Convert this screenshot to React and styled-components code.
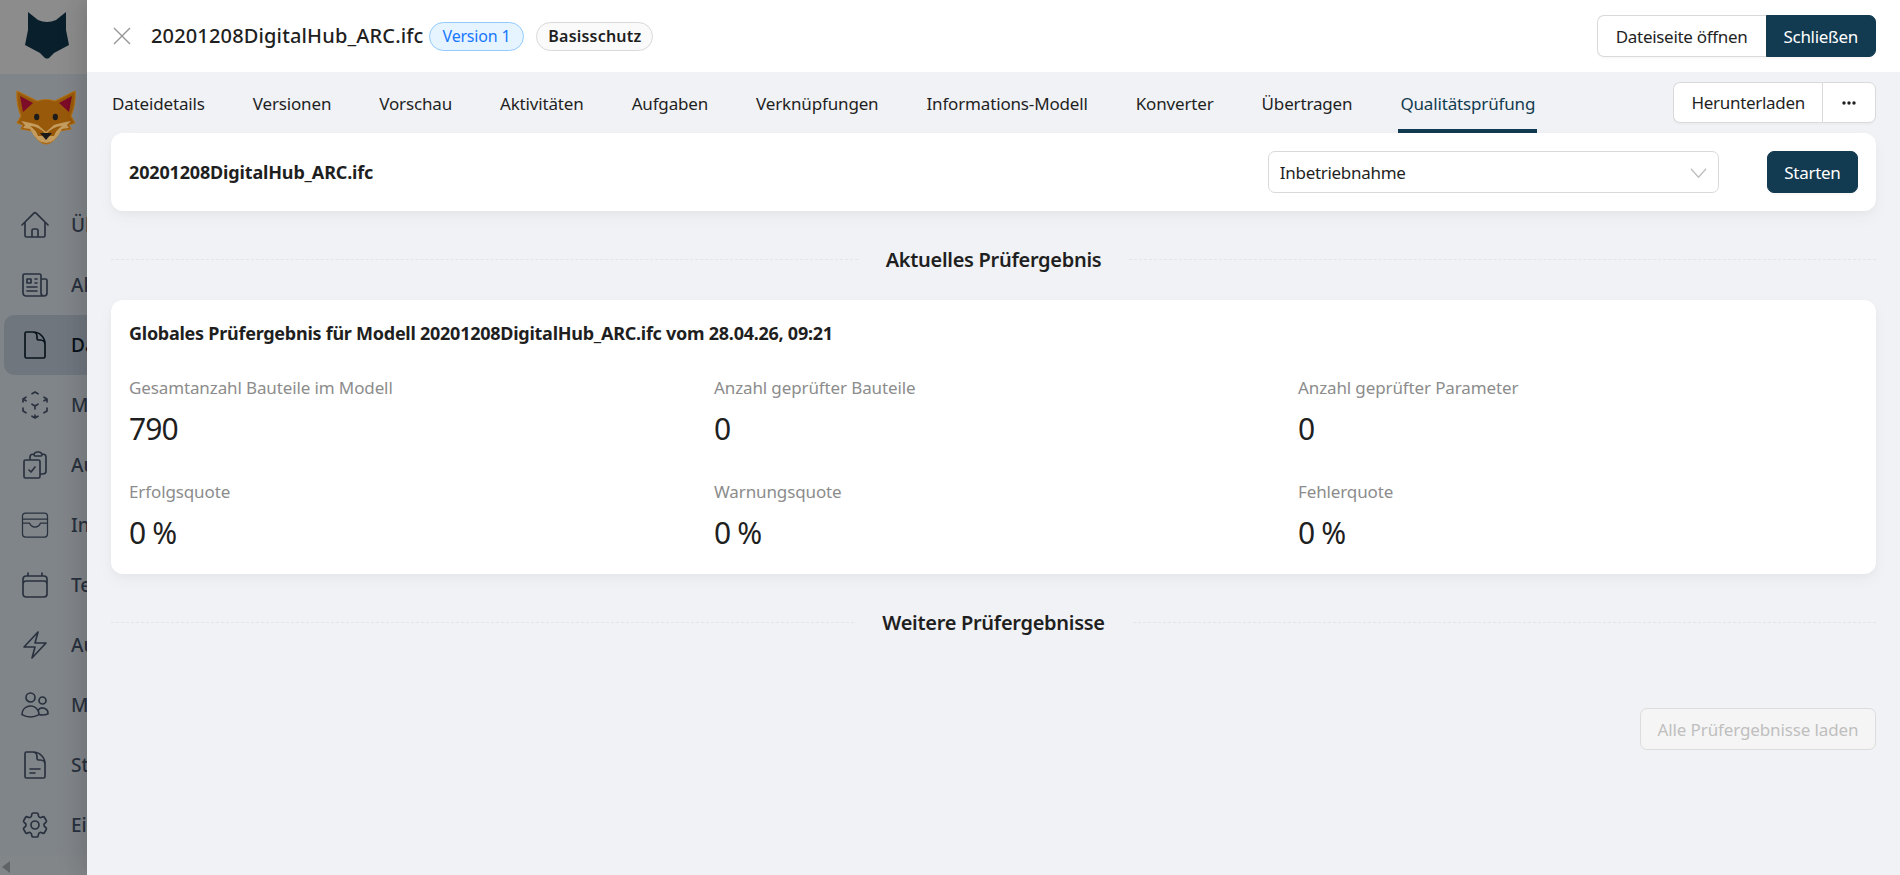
import styled, { createGlobalStyle } from "styled-components";
import {
  HiOutlineHome,
  HiOutlineNewspaper,
  HiOutlineDocument,
  HiOutlineCubeTransparent,
  HiOutlineClipboardDocumentCheck,
  HiOutlineCalendar,
  HiOutlineBolt,
  HiOutlineUsers,
  HiOutlineDocumentText,
  HiOutlineCog6Tooth,
} from "react-icons/hi2";

const GlobalStyle = createGlobalStyle`
  html, body, #root {
    margin: 0;
    height: 100%;
  }
  body {
    overflow: hidden;
    font-family: "Noto Sans", "Open Sans", sans-serif;
    color: #1f1f1f;
  }
  * {
    box-sizing: border-box;
  }
`;

const Page = styled.div`
  display: flex;
  height: 100vh;
`;

const Rail = styled.aside`
  position: relative;
  flex: 0 0 87px;
  overflow: hidden;
  display: flex;
  flex-direction: column;
  background: #eaf2f9;
`;

const Mask = styled.div`
  position: absolute;
  inset: 0;
  background: rgba(0, 0, 0, 0.45);
`;

const RailTop = styled.div`
  flex: 0 0 74px;
  background: #fff;
  padding: 12px 0 0 25px;
`;

const FoxWrap = styled.div`
  position: relative;
  z-index: 1;
  flex: 0 0 121px;
  padding: 16px 0 0 16px;
`;

const NavList = styled.nav`
  display: flex;
  flex-direction: column;
  padding: 0 0 0 4px;
  flex: 1;
`;

const NavItem = styled.div`
  display: flex;
  align-items: center;
  gap: 20px;
  height: 60px;
  padding-left: 15px;
  border-radius: 10px 0 0 10px;
  white-space: nowrap;
  font-size: 19px;
  font-weight: 500;
  color: ${(p) => (p.$active ? "#0d2231" : "#4b5a72")};
  background: ${(p) => (p.$active ? "#cdd8e6" : "transparent")};
  svg {
    flex: 0 0 32px;
    width: 32px;
    height: 32px;
    stroke-width: 1.25;
  }
  span {
    min-width: 0;
    overflow: hidden;
  }
`;

const ScrollBar = styled.div`
  flex: 0 0 20px;
  background: #fff;
  opacity: 0.25;
  padding: 6px 0 0 2px;
`;

const ScrollArrow = styled.div`
  width: 0;
  height: 0;
  border-top: 6px solid transparent;
  border-bottom: 6px solid transparent;
  border-right: 8px solid #000;
`;

const Drawer = styled.main`
  position: relative;
  z-index: 1;
  flex: 1;
  display: flex;
  flex-direction: column;
  background: #f0f2f5;
  box-shadow: -6px 0 16px 0 rgba(0, 0, 0, 0.08), -9px 0 28px 0 rgba(0, 0, 0, 0.05);
`;

const DrawerHeader = styled.header`
  flex: 0 0 72px;
  display: flex;
  align-items: center;
  padding: 0 24px 0 26px;
  background: #fff;
`;

const CloseButton = styled.button`
  display: flex;
  width: 18px;
  height: 18px;
  padding: 0;
  margin-right: 20px;
  border: 0;
  background: none;
  color: #969696;
`;

const FileName = styled.h1`
  margin: 0 5px 0 0;
  font-size: 20px;
  font-weight: 500;
  letter-spacing: 0.15px;
  line-height: 28px;
`;

const Chip = styled.span`
  display: inline-flex;
  align-items: center;
  height: 29px;
  padding: 0 ${(p) => (p.$blue ? "13px" : "11px")};
  margin-right: 12px;
  border-radius: 15px;
  font-size: 16px;
  letter-spacing: ${(p) => (p.$blue ? "-0.2px" : "0.2px")};
  font-weight: ${(p) => (p.$blue ? 400 : 600)};
  border: 1px solid ${(p) => (p.$blue ? "#91caff" : "#d9d9d9")};
  background: ${(p) => (p.$blue ? "#e6f4ff" : "#fafafa")};
  color: ${(p) => (p.$blue ? "#1677ff" : "#1f1f1f")};
`;

const HeaderActions = styled.div`
  margin-left: auto;
  display: flex;
`;

const Button = styled.button`
  height: ${(p) => p.$height || "41px"};
  padding: 0 ${(p) => p.$pad || "17px"};
  border: 1px solid ${(p) => (p.$primary ? "#123a50" : "#d9d9d9")};
  border-radius: 7px;
  font-family: inherit;
  font-size: 17px;
  letter-spacing: -0.3px;
  white-space: nowrap;
  color: ${(p) => (p.$primary ? "#fff" : "#1f1f1f")};
  background: ${(p) => (p.$primary ? "#123a50" : "#fff")};
  box-shadow: 0 2px 0 rgba(0, 0, 0, 0.02);
`;

const GroupLeft = styled(Button)`
  border-top-right-radius: 0;
  border-bottom-right-radius: 0;
  border-right-width: 0;
`;

const GroupRight = styled(Button)`
  border-top-left-radius: 0;
  border-bottom-left-radius: 0;
`;

const DrawerBody = styled.div`
  flex: 1;
  display: flex;
  flex-direction: column;
  padding: 0 24px 0 24px;
`;

const TabBar = styled.div`
  flex: 0 0 61px;
  display: flex;
  justify-content: space-between;
`;

const TabList = styled.div`
  display: flex;
  gap: 44px;
`;

const Tab = styled.div`
  display: flex;
  align-items: center;
  height: 61px;
  padding: 6px 2px 0;
  font-size: 17px;
  letter-spacing: -0.16px;
  white-space: nowrap;
  border-bottom: 4px solid ${(p) => (p.$active ? "#123a50" : "transparent")};
  color: ${(p) => (p.$active ? "#123a50" : "#1f1f1f")};
  &:first-child {
    margin-left: -1px;
  }
`;

const TabActions = styled.div`
  display: flex;
  padding-top: 10px;
`;

const DotsIcon = styled.svg`
  display: block;
  width: 14px;
  height: 4px;
  fill: #1f1f1f;
`;

const CheckCard = styled.section`
  flex: 0 0 78px;
  display: flex;
  align-items: center;
  padding: 0 18px;
  background: #fff;
  border-radius: 12px;
  box-shadow: 0 6px 16px rgba(0, 0, 0, 0.04), 0 3px 6px rgba(0, 0, 0, 0.02);
`;

const CheckName = styled.div`
  flex: 1;
  font-size: 18px;
  font-weight: 700;
  letter-spacing: -0.16px;
`;

const SelectBox = styled.div`
  display: flex;
  align-items: center;
  justify-content: space-between;
  width: 451px;
  height: 42px;
  padding: 0 11px;
  margin-right: 48px;
  border: 1px solid #d9d9d9;
  border-radius: 7px;
  font-size: 17px;
  letter-spacing: -0.3px;
  svg {
    width: 17px;
    height: 17px;
    color: #bdbdbd;
  }
`;

const SectionTitle = styled.div`
  display: flex;
  align-items: center;
  height: 34px;
  margin-top: 31px;
  font-size: 20px;
  font-weight: 600;
  letter-spacing: -0.3px;
  color: #1f1f1f;
  white-space: nowrap;
  &::before,
  &::after {
    content: "";
    flex: 1;
    border-top: 1px dashed #e2e4e8;
  }
  span {
    padding: 0 28px;
  }
`;

const ResultCard = styled.section`
  margin-top: 24px;
  padding: 22px 18px 23px;
  background: #fff;
  border-radius: 12px;
  box-shadow: 0 6px 16px rgba(0, 0, 0, 0.04), 0 3px 6px rgba(0, 0, 0, 0.02);
`;

const ResultTitle = styled.div`
  font-size: 18px;
  line-height: 22px;
  font-weight: 700;
  letter-spacing: -0.26px;
  margin-bottom: 32px;
`;

const StatGrid = styled.div`
  display: grid;
  grid-template-columns: 585px 584px 1fr;
  row-gap: 33px;
`;

const Stat = styled.div`
  display: flex;
  flex-direction: column;
  gap: 11px;
`;

const StatLabel = styled.div`
  font-size: 17px;
  line-height: 24px;
  letter-spacing: -0.12px;
  color: #8c8c8c;
`;

const StatValue = styled.div`
  font-size: 30px;
  line-height: 36px;
  letter-spacing: -0.9px;
  color: #1f1f1f;
`;

const LoadButton = styled.button`
  align-self: flex-end;
  height: 42px;
  width: 236px;
  margin-top: 69px;
  border: 1px solid #dcdcdc;
  border-radius: 7px;
  background: #f5f5f5;
  color: #bfbfbf;
  font-family: inherit;
  font-size: 17px;
  letter-spacing: -0.12px;
`;

function TopLogo() {
  return (
    <svg width="44" height="47" viewBox="0 0 44 47">
      <path
        fill="#133a50"
        d="M3 0 L13 8 Q22 12 31 8 L41 0 L41 18 L44 33 L29 41 L24 46 Q22 47 20 46 L15 41 L0 33 L3 18 Z"
      />
    </svg>
  );
}

function FoxLogo() {
  return (
    <svg width="60" height="56" viewBox="0 0 60 56">
      <path
        fill="#98590a"
        stroke="#b0701a"
        strokeWidth="1.2"
        strokeLinejoin="round"
        d="M1 1 L21 11 Q30 8 39 11 L59 1 Q60 14 55 26 L59 33 L53 35 L55 39 L44 41 Q37 54 30 54 Q23 54 16 41 L5 39 L7 35 L1 33 L5 26 Q0 14 1 1 Z"
      />
      <path fill="#7c0c28" d="M4 6 L17 13 L7 22 Z M56 6 L43 13 L53 22 Z" />
      <path
        fill="#c49c5e"
        d="M5 31 Q16 33 22 35 L30 42 L38 35 Q44 33 55 31 L51 35 L53 38 L46 39 Q39 53 30 53 Q21 53 14 39 L7 38 L9 35 Z"
      />
      <path fill="#98590a" d="M14 36 Q22 36 30 44 Q38 36 46 36 Q40 40 38 46 L22 46 Q20 40 14 36 Z" />
      <ellipse cx="20.7" cy="27" rx="2.6" ry="3.3" fill="#1c1c1c" />
      <ellipse cx="39.3" cy="27" rx="2.6" ry="3.3" fill="#1c1c1c" />
      <path fill="#1a1a1a" d="M24 43 H36 L30 50 Z" />
    </svg>
  );
}

function InboxIcon() {
  return (
    <svg viewBox="0 0 32 32" fill="none" stroke="currentColor" strokeWidth="1.6" strokeLinejoin="round" strokeLinecap="round">
      <rect x="3.5" y="4" width="25" height="24" rx="3" />
      <path d="M3.5 10 H28.5 M3.5 14 H10.5 Q12 18 16 18 Q20 18 21.5 14 H28.5" />
    </svg>
  );
}

const navItems = [
  { icon: <HiOutlineHome />, label: "Übersicht" },
  { icon: <HiOutlineNewspaper />, label: "Aktuelles" },
  { icon: <HiOutlineDocument />, label: "Dateien", active: true },
  { icon: <HiOutlineCubeTransparent />, label: "Modelle" },
  { icon: <HiOutlineClipboardDocumentCheck />, label: "Aufgaben" },
  { icon: <InboxIcon />, label: "Inbox" },
  { icon: <HiOutlineCalendar />, label: "Termine" },
  { icon: <HiOutlineBolt />, label: "Automation" },
  { icon: <HiOutlineUsers />, label: "Mitglieder" },
  { icon: <HiOutlineDocumentText />, label: "Standards" },
  { icon: <HiOutlineCog6Tooth />, label: "Einstellungen" },
];

const tabs = [
  "Dateidetails",
  "Versionen",
  "Vorschau",
  "Aktivitäten",
  "Aufgaben",
  "Verknüpfungen",
  "Informations-Modell",
  "Konverter",
  "Übertragen",
  "Qualitätsprüfung",
];

const stats = [
  { label: "Gesamtanzahl Bauteile im Modell", value: "790" },
  { label: "Anzahl geprüfter Bauteile", value: "0" },
  { label: "Anzahl geprüfter Parameter", value: "0" },
  { label: "Erfolgsquote", value: "0 %" },
  { label: "Warnungsquote", value: "0 %" },
  { label: "Fehlerquote", value: "0 %" },
];

export default function App() {
  return (
    <Page>
      <GlobalStyle />
      <Rail>
        <RailTop>
          <TopLogo />
        </RailTop>
        <FoxWrap>
          <FoxLogo />
        </FoxWrap>
        <NavList>
          {navItems.map((item) => (
            <NavItem key={item.label} $active={item.active}>
              {item.icon}
              <span>{item.label}</span>
            </NavItem>
          ))}
        </NavList>
        <ScrollBar>
          <ScrollArrow />
        </ScrollBar>
        <Mask />
      </Rail>
      <Drawer>
        <DrawerHeader>
          <CloseButton aria-label="Schließen">
            <svg viewBox="0 0 18 18" width="18" height="18" stroke="currentColor" strokeWidth="1.4">
              <path d="M1 1 L17 17 M17 1 L1 17" />
            </svg>
          </CloseButton>
          <FileName>20201208DigitalHub_ARC.ifc</FileName>
          <Chip $blue>Version 1</Chip>
          <Chip>Basisschutz</Chip>
          <HeaderActions>
            <GroupLeft $height="42px" $pad="18px">Dateiseite öffnen</GroupLeft>
            <GroupRight $primary $height="42px">Schließen</GroupRight>
          </HeaderActions>
        </DrawerHeader>
        <DrawerBody>
          <TabBar>
            <TabList>
              {tabs.map((tab) => (
                <Tab key={tab} $active={tab === "Qualitätsprüfung"}>
                  {tab}
                </Tab>
              ))}
            </TabList>
            <TabActions>
              <GroupLeft>Herunterladen</GroupLeft>
              <GroupRight $pad="19px">
                <DotsIcon viewBox="0 0 14 4">
                  <circle cx="2" cy="2" r="1.7" />
                  <circle cx="7" cy="2" r="1.7" />
                  <circle cx="12" cy="2" r="1.7" />
                </DotsIcon>
              </GroupRight>
            </TabActions>
          </TabBar>
          <CheckCard>
            <CheckName>20201208DigitalHub_ARC.ifc</CheckName>
            <SelectBox>
              Inbetriebnahme
              <svg viewBox="0 0 18 18" fill="none" stroke="currentColor" strokeWidth="1.3">
                <path d="M1 5 L9 14 L17 5" />
              </svg>
            </SelectBox>
            <Button $primary $height="42px" $pad="16.5px">Starten</Button>
          </CheckCard>
          <SectionTitle>
            <span>Aktuelles Prüfergebnis</span>
          </SectionTitle>
          <ResultCard>
            <ResultTitle>
              Globales Prüfergebnis für Modell 20201208DigitalHub_ARC.ifc vom 28.04.26, 09:21
            </ResultTitle>
            <StatGrid>
              {stats.map((stat) => (
                <Stat key={stat.label}>
                  <StatLabel>{stat.label}</StatLabel>
                  <StatValue>{stat.value}</StatValue>
                </Stat>
              ))}
            </StatGrid>
          </ResultCard>
          <SectionTitle>
            <span>Weitere Prüfergebnisse</span>
          </SectionTitle>
          <LoadButton disabled>Alle Prüfergebnisse laden</LoadButton>
        </DrawerBody>
      </Drawer>
    </Page>
  );
}
